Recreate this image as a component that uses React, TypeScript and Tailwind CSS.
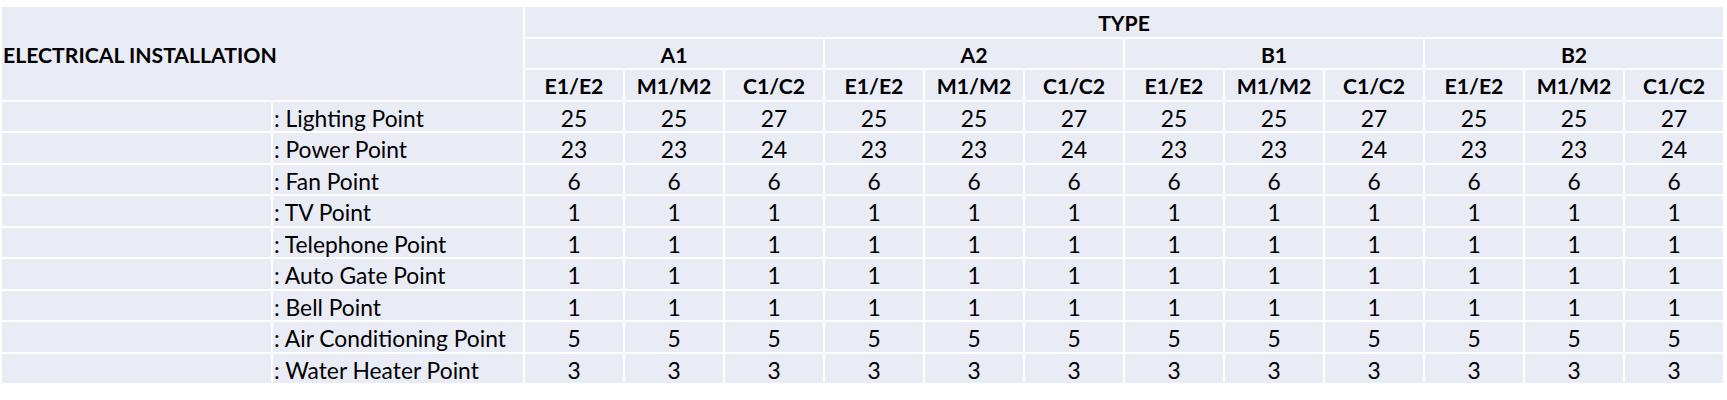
import React from 'react';

const groups = ['A1', 'A2', 'B1', 'B2'];
const subs = ['E1/E2', 'M1/M2', 'C1/C2'];

const rows: { label: string; values: number[] }[] = [
  { label: ': Lighting Point', values: [25, 25, 27] },
  { label: ': Power Point', values: [23, 23, 24] },
  { label: ': Fan Point', values: [6, 6, 6] },
  { label: ': TV Point', values: [1, 1, 1] },
  { label: ': Telephone Point', values: [1, 1, 1] },
  { label: ': Auto Gate Point', values: [1, 1, 1] },
  { label: ': Bell Point', values: [1, 1, 1] },
  { label: ': Air Conditioning Point', values: [5, 5, 5] },
  { label: ': Water Heater Point', values: [3, 3, 3] },
];

const cell = 'bg-[#e9ebf5] flex items-center pt-[4px]';
const head = 'font-bold text-[21.2px]';

export default function App() {
  return (
    <div className="bg-white w-[1727px] h-[400px] pl-[2px] pt-[7px] font-['Lato','Noto_Sans',sans-serif] text-[22.8px] leading-none text-black">
      <div className="grid grid-cols-[269px_250px_repeat(12,98px)] auto-rows-[29.5px] gap-[2px] w-fit">
        {/* header */}
        <div className={`${cell} ${head} col-span-2 row-span-3 pl-[1px]`}>ELECTRICAL INSTALLATION</div>
        <div className={`${cell} ${head} col-span-12 justify-center`}>TYPE</div>
        {groups.map(g => (
          <div key={g} className={`${cell} ${head} col-span-3 justify-center`}>{g}</div>
        ))}
        {groups.map(g =>
          subs.map(s => (
            <div key={g + s} className={`${cell} ${head} justify-center`}>{s}</div>
          ))
        )}

        {/* body */}
        {rows.map(r => (
          <React.Fragment key={r.label}>
            <div className={cell} />
            <div className={`${cell} pl-[1px]`}>{r.label}</div>
            {groups.map(g =>
              r.values.map((v, i) => (
                <div key={g + i} className={`${cell} justify-center`}>{v}</div>
              ))
            )}
          </React.Fragment>
        ))}
      </div>
    </div>
  );
}
